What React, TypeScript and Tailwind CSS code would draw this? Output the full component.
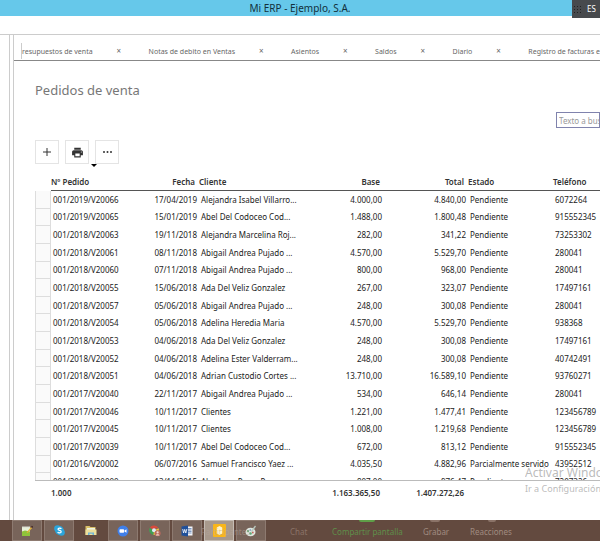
import React, { useState } from 'react';
import { MdPrint } from 'react-icons/md';

interface Order {
  number: string;
  date: string;
  client: string;
  base: string;
  total: string;
  status: string;
  phone: string;
}

const orders: Order[] = [
  { number: '001/2019/V20066', date: '17/04/2019', client: 'Alejandra Isabel Villarro...', base: '4.000,00', total: '4.840,00', status: 'Pendiente', phone: '6072264' },
  { number: '001/2019/V20065', date: '15/01/2019', client: 'Abel Del Codoceo Cod...', base: '1.488,00', total: '1.800,48', status: 'Pendiente', phone: '915552345' },
  { number: '001/2018/V20063', date: '19/11/2018', client: 'Alejandra Marcelina Roj...', base: '282,00', total: '341,22', status: 'Pendiente', phone: '73253302' },
  { number: '001/2018/V20061', date: '08/11/2018', client: 'Abigail Andrea Pujado ...', base: '4.570,00', total: '5.529,70', status: 'Pendiente', phone: '280041' },
  { number: '001/2018/V20060', date: '07/11/2018', client: 'Abigail Andrea Pujado ...', base: '800,00', total: '968,00', status: 'Pendiente', phone: '280041' },
  { number: '001/2018/V20055', date: '15/06/2018', client: 'Ada Del Veliz Gonzalez', base: '267,00', total: '323,07', status: 'Pendiente', phone: '17497161' },
  { number: '001/2018/V20057', date: '05/06/2018', client: 'Abigail Andrea Pujado ...', base: '248,00', total: '300,08', status: 'Pendiente', phone: '280041' },
  { number: '001/2018/V20054', date: '05/06/2018', client: 'Adelina Heredia Maria', base: '4.570,00', total: '5.529,70', status: 'Pendiente', phone: '938368' },
  { number: '001/2018/V20053', date: '04/06/2018', client: 'Ada Del Veliz Gonzalez', base: '248,00', total: '300,08', status: 'Pendiente', phone: '17497161' },
  { number: '001/2018/V20052', date: '04/06/2018', client: 'Adelina Ester Valderram...', base: '248,00', total: '300,08', status: 'Pendiente', phone: '40742491' },
  { number: '001/2018/V20051', date: '04/06/2018', client: 'Adrian Custodio Cortes ...', base: '13.710,00', total: '16.589,10', status: 'Pendiente', phone: '93760271' },
  { number: '001/2017/V20040', date: '22/11/2017', client: 'Abigail Andrea Pujado ...', base: '534,00', total: '646,14', status: 'Pendiente', phone: '280041' },
  { number: '001/2017/V20046', date: '10/11/2017', client: 'Clientes', base: '1.221,00', total: '1.477,41', status: 'Pendiente', phone: '123456789' },
  { number: '001/2017/V20045', date: '10/11/2017', client: 'Clientes', base: '1.008,00', total: '1.219,68', status: 'Pendiente', phone: '123456789' },
  { number: '001/2017/V20039', date: '10/11/2017', client: 'Abel Del Codoceo Cod...', base: '672,00', total: '813,12', status: 'Pendiente', phone: '915552345' },
  { number: '001/2016/V20002', date: '06/07/2016', client: 'Samuel Francisco Yaez ...', base: '4.035,50', total: '4.882,96', status: 'Parcialmente servido', phone: '43952512' },
  { number: '001/2015/V20000', date: '13/11/2015', client: 'Abraham Perez Perez', base: '807,00', total: '976,47', status: 'Pendiente', phone: '7207326' },
];

const tabs = ['resupuestos de venta', 'Notas de debito en Ventas', 'Asientos', 'Saldos', 'Diario', 'Registro de facturas e'];

const Columns = () => (
  <colgroup>
    <col className="w-[16px]" />
    <col className="w-[97px]" />
    <col className="w-[51px]" />
    <col className="w-[101px]" />
    <col className="w-[84px]" />
    <col className="w-[84px]" />
    <col className="w-[85px]" />
    <col />
  </colgroup>
);

const NotepadIcon = () => (
  <svg width="12" height="12" viewBox="0 0 12 12">
    <rect x="1" y="2" width="8" height="9" fill="#e9f0d8" />
    <path d="M1 6.500l3-1 5 1V11H1z" fill="#8fc43a" />
    <path d="M2 1v2M4 1v2M6 1v2M8 1v2" stroke="#d9d9cf" strokeWidth="1" />
    <path d="M5.500 7.500L10 2l1.200 1-4.500 5z" fill="#e0b13c" />
    <path d="M10 2l1-1.300 1 1L11.200 3z" fill="#3d1f1c" />
  </svg>
);

const SkypeIcon = () => (
  <svg width="11" height="11" viewBox="0 0 11 11">
    <circle cx="3.500" cy="3.500" r="3.300" fill="#2aa5dc" />
    <circle cx="7.500" cy="7.500" r="3.300" fill="#2aa5dc" />
    <circle cx="5.500" cy="5.500" r="4.400" fill="#2aa5dc" />
    <path d="M7.300 3.900C6.700 2.700 4 2.800 4 4.200c0 1.500 3.200.9 3.200 2.500C7.200 8.200 4.300 8.300 3.700 7" fill="none" stroke="#fff" strokeWidth="1.200" />
  </svg>
);

const FolderIcon = () => (
  <svg width="12" height="11" viewBox="0 0 12 11">
    <path d="M0.500 1h4l1 1h5v8h-10z" fill="#d9c069" />
    <path d="M2 3h8v5H2z" fill="#eef3e4" />
    <path d="M0.500 4.500h11V10h-11z" fill="#ecdf9c" />
    <path d="M3 10V7.500h6V10H7.500V8.700h-3V10z" fill="#6fb5d8" />
  </svg>
);

const ZoomIcon = () => (
  <svg width="12" height="12" viewBox="0 0 12 12">
    <circle cx="6" cy="6" r="5.500" fill="#3f7fea" />
    <rect x="2.500" y="4.200" width="4.600" height="3.600" rx="0.800" fill="#fff" />
    <path d="M7.500 5.500l2-1.200v3.400l-2-1.200z" fill="#fff" />
  </svg>
);

const ChromeIcon = () => (
  <svg width="12" height="12" viewBox="0 0 12 12">
    <path d="M5 5L.8 2.700A5 5 0 0 1 9.500 3.200L5 3.500z" fill="#d84a3c" />
    <path d="M5 5.500L.8 2.700A5 5 0 0 0 4.500 10z" fill="#3f9f55" />
    <path d="M5 5.500l4.600-2.200A5 5 0 0 1 4.500 10z" fill="#e9c440" />
    <circle cx="5" cy="5.200" r="2" fill="#dfe9f5" />
    <circle cx="8.600" cy="8.300" r="3" fill="#b9695e" />
    <circle cx="8.600" cy="7.400" r="1.100" fill="#f1d9ce" />
    <path d="M6.700 10.400c.4-1.700 3.400-1.700 3.800 0z" fill="#f1d9ce" />
  </svg>
);

const WordIcon = () => (
  <svg width="12" height="12" viewBox="0 0 12 12">
    <rect x="6" y="1.500" width="5.500" height="9" fill="#f3f6fb" />
    <path d="M7 3.500h3.500M7 5h3.500M7 6.500h3.500M7 8h3.500" stroke="#2b579a" strokeWidth="0.600" />
    <path d="M0.500 1.500L7 .500v11L.500 10.500z" fill="#20509a" />
    <path d="M1.700 4l.9 4 1.100-3.600L4.800 8l1-4" fill="none" stroke="#fff" strokeWidth="0.800" />
  </svg>
);

const YellowAppIcon = () => (
  <svg width="13" height="13" viewBox="0 0 12 12">
    <rect width="12" height="12" rx="1" fill="#f9b61a" />
    <path d="M6 1.800l2.500 1.500v5.400L6 10.200 3.500 8.700V3.300z" fill="#fff3c9" />
    <path d="M6 5l1 1-1 1-1-1z" fill="#fbd777" />
  </svg>
);

const PaintIcon = () => (
  <svg width="12" height="12" viewBox="0 0 12 12">
    <ellipse cx="5.500" cy="7" rx="5" ry="4.300" fill="#dfe6df" />
    <circle cx="3" cy="6" r="1" fill="#4b9b62" />
    <circle cx="5.500" cy="8.500" r="1.300" fill="#5ea774" />
    <circle cx="7.800" cy="7.500" r="0.900" fill="#c9645a" />
    <circle cx="5.300" cy="5" r="0.800" fill="#5a8fc9" />
    <path d="M6.500 6.500L10.500 1" stroke="#b9c9c0" strokeWidth="1.300" />
  </svg>
);

const taskbarApps = [
  { name: 'Notepad++', icon: <NotepadIcon />, open: true, active: false },
  { name: 'Skype', icon: <SkypeIcon />, open: true, active: false },
  { name: 'Explorador', icon: <FolderIcon />, open: false, active: false },
  { name: 'Zoom', icon: <ZoomIcon />, open: true, active: false },
  { name: 'Chrome', icon: <ChromeIcon />, open: true, active: false },
  { name: 'Word', icon: <WordIcon />, open: true, active: false },
  { name: 'ERP', icon: <YellowAppIcon />, open: true, active: true },
  { name: 'Paint', icon: <PaintIcon />, open: true, active: false },
];

const headCell = 'p-0 pr-1 align-middle font-semibold border-b border-[#555]';
const bodyCell = 'p-0 px-0.5 align-middle overflow-hidden';
const toolButton = 'flex size-6 items-center justify-center border border-[#e4e4e4]';

const App: React.FC = () => {
  const [search, setSearch] = useState('');
  const [activeTab, setActiveTab] = useState('');

  return (
    <div className="flex h-screen flex-col overflow-hidden whitespace-nowrap bg-white font-['Noto_Sans','Open_Sans',sans-serif] text-[8px] leading-3 text-[#222]">
      {/* Window title */}
      <header className="relative h-4 shrink-0 bg-[#66c8ea] text-center text-[10px] leading-4 text-[#12303c]">
        <h1>Mi ERP - Ejemplo, S.A.</h1>
        <div className="absolute right-0 top-0 flex h-[18px] w-7 items-center gap-1.5 bg-[#474a4d] pl-0.5 text-[8px] text-white">
          <span className="grid grid-cols-3 gap-0.5">
            {Array.from({ length: 9 }, (_, i) => (
              <i key={i} className="size-px bg-[#222]" />
            ))}
          </span>
          ES
        </div>
      </header>
      <div className="h-[18px] shrink-0" />

      <div className="flex min-h-0 flex-1 border-t border-[#ccc]">
        <aside className="w-2.5 shrink-0 border-r border-[#ccc]" />
        <div className="w-1 shrink-0 border-r border-[#ccc]" />

        <main className="flex min-w-0 flex-1 flex-col">
          {/* Tabs */}
          <nav className="flex h-[26px] shrink-0 items-end overflow-hidden border-b border-[#888] pb-px pl-[7px] text-[7px] text-[#666]">
            <span className="h-4 border-l border-[#ccc]" />
            {tabs.map((tab) => (
              <div key={tab} className="flex shrink-0 items-center">
                <button className={tab === activeTab ? 'text-black' : ''} onClick={() => setActiveTab(tab)}>{tab}</button>
                <button className="mb-0.5 ml-6 mr-7 w-1 text-[8px]" aria-label={`Cerrar ${tab}`}>×</button>
              </div>
            ))}
          </nav>

          <section className="flex min-h-0 flex-1 flex-col pl-[21px]">
            <h2 className="mt-[19px] text-[13px] leading-5 text-[#777]">Pedidos de venta</h2>

            <div className="mt-3 flex justify-end">
              <input
                className="h-4 w-[44px] border border-[#8083ad] pl-0.5 text-[8px] text-[#555] placeholder:text-[#999]"
                aria-label="Texto a buscar"
                placeholder="Texto a buscar"
                value={search}
                onChange={(e) => setSearch(e.target.value)}
              />
            </div>

            <div className="relative mt-3 flex gap-1.5 text-[#333]">
              <button aria-label="Nuevo" className={toolButton}>
                <svg width="8" height="8" viewBox="0 0 8 8">
                  <path d="M4 0v8M0 4h8" stroke="currentColor" />
                </svg>
              </button>
              <button aria-label="Imprimir" className={toolButton}>
                <MdPrint size={13} />
              </button>
              <button aria-label="Más" className={toolButton}>
                <svg width="9" height="2" viewBox="0 0 9 2" fill="currentColor">
                  <circle cx="1" cy="1" r="1" />
                  <circle cx="4.500" cy="1" r="1" />
                  <circle cx="8" cy="1" r="1" />
                </svg>
              </button>
              <svg className="absolute left-14 top-6" width="6" height="3" viewBox="0 0 6 3">
                <path d="M0 0h6L3 3z" fill="#000" />
              </svg>
            </div>

            {/* Orders grid */}
            <div className="mt-2.5 min-h-0 flex-1 overflow-hidden border-b border-[#bbb]">
              <table className="h-[317px] w-full table-fixed border-separate border-spacing-0">
                <Columns />
                <thead>
                  <tr className="h-[17px] text-left text-[#333]">
                    <th className="p-0" />
                    <th className={headCell}>Nº Pedido</th>
                    <th className={`${headCell} text-right`}>Fecha</th>
                    <th className={headCell}>Cliente</th>
                    <th className={`${headCell} text-right`}>Base</th>
                    <th className={`${headCell} text-right`}>Total</th>
                    <th className={headCell}>Estado</th>
                    <th className={headCell}>Teléfono</th>
                  </tr>
                </thead>
                <tbody>
                  {orders.map((order) => (
                    <tr key={order.number}>
                      <td className="border-b border-l border-r border-[#ddd] bg-[#fafafa] p-0" />
                      <td className={bodyCell}>{order.number}</td>
                      <td className={`${bodyCell} text-right`}>{order.date}</td>
                      <td className={bodyCell}>{order.client}</td>
                      <td className={`${bodyCell} text-right`}>{order.base}</td>
                      <td className={`${bodyCell} text-right`}>{order.total}</td>
                      <td className={bodyCell}>{order.status}</td>
                      <td className={bodyCell}>{order.phone}</td>
                    </tr>
                  ))}
                </tbody>
              </table>
            </div>

            {/* Totals */}
            <div className="relative h-[39px] shrink-0 pt-1.5">
              <table className="w-full table-fixed font-semibold text-[#333]">
                <Columns />
                <tbody>
                  <tr>
                    <td />
                    <td className="p-0">1.000</td>
                    <td />
                    <td />
                    <td className="p-0 pr-1 text-right">1.163.365,50</td>
                    <td className="p-0 pr-1 text-right">1.407.272,26</td>
                    <td />
                    <td />
                  </tr>
                </tbody>
              </table>
              <div className="absolute -top-4 right-0 w-[75px] overflow-hidden text-[#aaa]/80">
                <p className="text-[12px] leading-4">Activar Windows</p>
                <p className="text-[9px] leading-4">Ir a Configuración</p>
              </div>
            </div>
          </section>
        </main>
      </div>

      {/* Taskbar */}
      <footer className="relative flex h-[21px] shrink-0 items-stretch gap-0.5 bg-[#634a3f] pl-3">
        {taskbarApps.map((app) => (
          <button
            key={app.name}
            aria-label={app.name}
            className={`flex w-[30px] items-center justify-center ${app.active ? 'border border-[#c5bcb4] bg-[#a8998c]' : app.open ? 'border border-[#8d7a70] bg-[#78645a]' : ''}`}
          >
            {app.icon}
          </button>
        ))}
        <span className="absolute left-[201px] top-1.5 text-[#b8a89f]/50">Participantes</span>
        <span className="absolute left-[290px] top-1.5 text-[#8b7368]">Chat</span>
        <span className="absolute left-[332px] top-1.5 text-[#5f8f4a]">Compartir pantalla</span>
        <span className="absolute left-[423px] top-1.5 text-[#a08a80]">Grabar</span>
        <span className="absolute left-[470px] top-1.5 text-[#a08a80]">Reacciones</span>
        <i className="absolute left-[359px] top-0 h-0.5 w-4 rounded-b bg-[#5f9f48]" />
        <i className="absolute left-[430px] top-0 h-0.5 w-2.5 rounded-b bg-[#8b7368]" />
        <i className="absolute left-[488px] top-0 h-0.5 w-2 rounded-b bg-[#8b7368]" />
      </footer>
    </div>
  );
};

export default App;
